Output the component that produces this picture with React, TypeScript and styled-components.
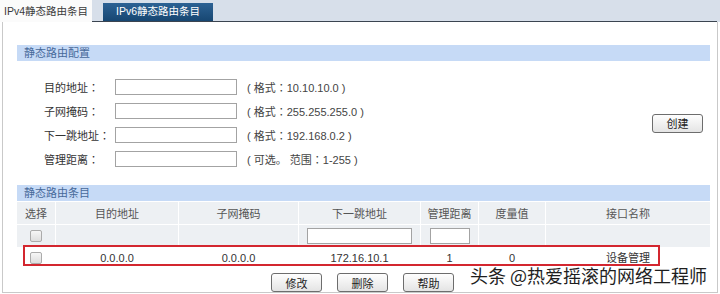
import React from "react";
import styled, { createGlobalStyle } from "styled-components";

const GlobalStyle = createGlobalStyle`
  html, body {
    margin: 0;
    padding: 0;
    background: #ffffff;
  }
  body {
    font-family: "Liberation Sans", "Noto Sans CJK SC", sans-serif;
    font-size: 11px;
    color: #333333;
  }
  * {
    box-sizing: border-box;
  }
`;

const Page = styled.div`
  position: relative;
  width: 720px;
  height: 294px;
  overflow: hidden;
  background: #ffffff;
`;

const TabBar = styled.div`
  display: flex;
  height: 22px;
  background: #d7dfea;
  padding-right: 3px;
`;

const ActiveTab = styled.div`
  width: 92px;
  height: 22px;
  background: #fbfbfb;
  padding: 5px 0 0 4px;
  color: #3a3a3a;
  font-size: 10.5px;
  line-height: 13px;
  white-space: nowrap;
`;

const TabRest = styled.div`
  flex: 1;
  display: flex;
  align-items: flex-end;
  border-bottom: 1px solid #3b4450;
  padding-left: 11px;
`;

const Tab = styled.div`
  width: 110px;
  height: 18px;
  background: linear-gradient(#2c6294, #174772);
  color: #ffffff;
  font-size: 10.5px;
  text-align: center;
  line-height: 17px;
  white-space: nowrap;
`;

const Panel = styled.div`
  margin: 0 2px;
  height: 271px;
  border: 1px solid #c9c9c9;
  border-top: none;
  padding: 23px 7px 0 14px;
`;

const SectionHeader = styled.div<{ $top?: number }>`
  height: 16px;
  margin-top: ${(p) => p.$top ?? 0}px;
  background: #c6daf6;
  color: #47699a;
  padding-left: 7px;
  line-height: 16px;
`;

const Form = styled.div`
  display: flex;
  align-items: center;
  padding-top: 14px;
`;

const FormRows = styled.div`
  display: flex;
  flex-direction: column;
`;

const FormRow = styled.div`
  display: flex;
  align-items: center;
  height: 24px;
`;

const Label = styled.span`
  width: 71px;
  margin-left: 27px;
  color: #333333;
  white-space: nowrap;
`;

const Colon = styled.span`
  font-family: "Noto Sans CJK JP", sans-serif;
`;

const TextInput = styled.input<{ $w: number }>`
  width: ${(p) => p.$w}px;
  height: 16px;
  border: 1px solid #a3a3a3;
  background: #ffffff;
  padding: 0;
  margin: 0;
  outline: none;
`;

const Hint = styled.span`
  margin-left: 10px;
  color: #444444;
  white-space: nowrap;
`;

const Button = styled.button`
  width: 51px;
  height: 19px;
  padding: 0;
  border: 1px solid #6d6d6d;
  border-radius: 3px;
  background: linear-gradient(#fefefe, #e4e4e4);
  font-family: "Liberation Sans", "Noto Sans CJK SC", sans-serif;
  font-size: 11px;
  color: #222222;
`;

const CreateButton = styled(Button)`
  margin-left: auto;
  margin-right: 7px;
`;

const Grid = styled.div`
  display: grid;
  grid-template-columns: 38px 122px 119px 121px 57px 66px 164px;
  grid-template-rows: 22px 22px 20px;
  gap: 1px;
  background: #ffffff;
  margin-top: 1px;
`;

const HeadCell = styled.div`
  background: #edf0f3;
  display: flex;
  align-items: center;
  justify-content: center;
  color: #555555;
  white-space: nowrap;
`;

const FilterCell = styled(HeadCell)``;

const Cell = styled.div`
  display: flex;
  align-items: center;
  justify-content: center;
  color: #333333;
  line-height: 13px;
  white-space: nowrap;
`;

const Check = styled.span`
  width: 12px;
  height: 12px;
  border: 1px solid #ababab;
  border-radius: 2px;
  background: linear-gradient(#f6f6f6, #dedede);
`;

const Actions = styled.div`
  display: flex;
  justify-content: center;
  gap: 15px;
  margin-top: 5px;
  padding-right: 2px;
`;

const Highlight = styled.div`
  position: absolute;
  left: 23px;
  top: 245px;
  width: 637px;
  height: 21px;
  border: 2px solid #d3262f;
  pointer-events: none;
`;

const Watermark = styled.div`
  position: absolute;
  left: 470px;
  top: 266px;
  font-family: "Noto Sans CJK SC", sans-serif;
  font-size: 18px;
  line-height: 18px;
  color: #1e1e1e;
  white-space: nowrap;
  text-shadow: 0 0 2px #ffffff, 0 0 2px #ffffff, 1px 1px 1px #ffffff;
`;

const formRows = [
  { label: "目的地址", pre: "( 格式", value: "10.10.10.0 )" },
  { label: "子网掩码", pre: "( 格式", value: "255.255.255.0 )" },
  { label: "下一跳地址", pre: "( 格式", value: "192.168.0.2 )" },
  { label: "管理距离", pre: "( 可选。 范围", value: "1-255 )" },
];

const columns = ["选择", "目的地址", "子网掩码", "下一跳地址", "管理距离", "度量值", "接口名称"];

const route = ["0.0.0.0", "0.0.0.0", "172.16.10.1", "1", "0", "设备管理"];

export default function App() {
  return (
    <Page>
      <GlobalStyle />
      <TabBar>
        <ActiveTab>IPv4静态路由条目</ActiveTab>
        <TabRest>
          <Tab>IPv6静态路由条目</Tab>
        </TabRest>
      </TabBar>
      <Panel>
        <SectionHeader>静态路由配置</SectionHeader>
        <Form>
          <FormRows>
            {formRows.map((r) => (
              <FormRow key={r.label}>
                <Label>
                  {r.label}
                  <Colon>：</Colon>
                </Label>
                <TextInput $w={122} />
                <Hint>
                  {r.pre}
                  <Colon>：</Colon>
                  {r.value}
                </Hint>
              </FormRow>
            ))}
          </FormRows>
          <CreateButton>创建</CreateButton>
        </Form>

        <SectionHeader $top={14}>静态路由条目</SectionHeader>
        <Grid>
          {columns.map((c) => (
            <HeadCell key={c}>{c}</HeadCell>
          ))}
          <FilterCell>
            <Check />
          </FilterCell>
          <FilterCell />
          <FilterCell />
          <FilterCell>
            <TextInput $w={105} />
          </FilterCell>
          <FilterCell>
            <TextInput $w={40} />
          </FilterCell>
          <FilterCell />
          <FilterCell />
          <Cell>
            <Check />
          </Cell>
          {route.map((v, i) => (
            <Cell key={i}>{v}</Cell>
          ))}
        </Grid>
        <Actions>
          <Button>修改</Button>
          <Button>删除</Button>
          <Button>帮助</Button>
        </Actions>
      </Panel>
      <Highlight />
      <Watermark>头条 @热爱摇滚的网络工程师</Watermark>
    </Page>
  );
}
